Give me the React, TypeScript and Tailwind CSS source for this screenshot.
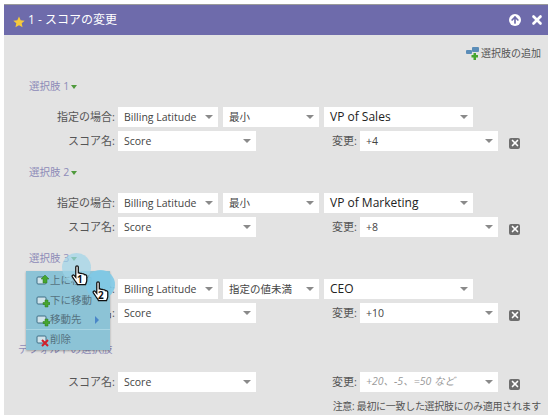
import React from 'react';
import { ArrowUp, X } from 'lucide-react';

const font = "font-['Open_Sans','Noto_Sans_CJK_JP',sans-serif]";

function Caret() {
  return <span className="w-0 h-0 border-x-[4px] border-x-transparent border-t-[4px] border-t-[#8a8a8a] shrink-0" />;
}

function Select({ value, width, big, hint }: { value: string; width: string; big?: boolean; hint?: boolean }) {
  return (
    <div className={`${width} h-5 bg-white flex items-center justify-between pl-[6px] pr-[5px] shrink-0 whitespace-nowrap`}>
      <span
        className={
          hint
            ? 'text-[10.500px] italic text-[#9a9a9a]'
            : big
              ? 'text-[12px] text-[#222]'
              : 'text-[10.500px] text-[#444] pt-px'
        }
      >
        {value}
      </span>
      <Caret />
    </div>
  );
}

function RemoveIcon() {
  return (
    <div className="w-[11px] h-[11px] ml-[11px] mt-[4px] rounded-[2px] bg-[#6e6e6e] flex items-center justify-center shrink-0">
      <X className="w-[10px] h-[10px] text-white" strokeWidth={4} />
    </div>
  );
}

function ScoreRow({ value, hint }: { value: string; hint?: boolean }) {
  return (
    <div className="flex items-center h-5">
      <span className="w-[114px] text-right pr-[3px] shrink-0 text-[11px] text-[#555]">スコア名:</span>
      <Select value="Score" width="w-[138px]" />
      <span className="w-[104px] text-right pr-[3px] shrink-0 text-[11px] text-[#555]">変更:</span>
      <Select value={value} width="w-[138px]" hint={hint} />
      <RemoveIcon />
    </div>
  );
}

function Choice({ n, field, op, value, score, mb }: { n: number; field: string; op: string; value: string; score: string; mb: string }) {
  return (
    <div className={mb}>
      <div className="flex items-center h-4 pl-[25px] text-[10.500px] text-[#8d8bb8] gap-[2px]">
        選択肢 {n}
        <span className="w-0 h-0 border-x-[3px] border-x-transparent border-t-[4px] border-t-[#4f9a3c]" />
      </div>
      <div className="flex items-center h-5 mt-[12px]">
        <span className="w-[114px] text-right pr-[3px] shrink-0 text-[11px] text-[#555]">指定の場合:</span>
        <Select value={field} width="w-[100px]" />
        <div className="w-[5px]" />
        <Select value={op} width="w-[96px]" />
        <div className="w-[5px]" />
        <Select value={value} width="w-[149px]" big />
      </div>
      <div className="mt-[4px]">
        <ScoreRow value={score} />
      </div>
    </div>
  );
}

function MenuIcon({ kind }: { kind: 'up' | 'down' | 'del' }) {
  return (
    <svg width="14" height="14" viewBox="0 0 14 14" className="shrink-0">
      <rect x="1" y="3" width="9" height="7" rx="1" fill="#cfe3ea" stroke="#3f6f86" />
      {kind === 'del' ? (
        <path d="M6 7l6 6M12 7l-6 6" stroke="#d0202a" strokeWidth="2" />
      ) : kind === 'up' ? (
        <path d="M9 1l4 4h-2v4H7V5H5z" fill="#46a52f" stroke="#2d7a1d" strokeWidth=".5" />
      ) : (
        <path d="M9 6h3v2.500h2v2h-2V13H9v-2.500H7v-2h2z" fill="#46a52f" stroke="#2d7a1d" strokeWidth=".5" />
      )}
    </svg>
  );
}

function Hand({ n, className }: { n: number; className: string }) {
  return (
    <div className={`absolute w-[18px] h-[22px] ${className}`}>
      <svg width="18" height="22" viewBox="0 0 20 26">
        <path
          d="M5 2.500c0-1.800 3-1.800 3 0V10c0-1 2.500-1 2.500 .5 0-1 2.500-1 2.500 .5 0-1 2.500-.8 2.500 1 .3-.8 2.500-.5 2.500 1.200v5c0 2-1 3-1.500 5H7c-.5-2-2-3-3.500-5.500L1 14c-1-1.800 1-3 2.300-1.500L5 14.500z"
          fill="#fff"
          stroke="#111"
          strokeWidth="1.500"
        />
      </svg>
      <span className="absolute left-[6px] top-[9px] text-[10px] leading-none font-bold text-[#111]">{n}</span>
    </div>
  );
}

export default function App() {
  return (
    <div className={`${font} w-[548px] h-[415px] bg-white pl-1 pt-1 overflow-hidden`}>
      <div className="relative h-[411px] bg-[#e3e3e3] border-t border-[#9a9a9a]">
        <header className="h-[30px] bg-[#6e6bab] flex items-center pl-[9px] pr-[4px] text-white">
          <svg width="12" height="12" viewBox="0 0 24 24" className="mt-[3px] shrink-0">
            <path d="M12 1l3.400 7.400 8 .9-6 5.400 1.700 8L12 18.600 4.900 22.700l1.700-8-6-5.400 8-.9z" fill="#f5c93c" />
          </svg>
          <span className="ml-[3px] text-[12px]">1 - スコアの変更</span>
          <div className="ml-auto flex items-center gap-[9px]">
            <div className="w-[12px] h-[12px] rounded-full bg-white flex items-center justify-center">
              <ArrowUp className="w-[10px] h-[10px] text-[#6e6bab]" strokeWidth={4} />
            </div>
            <X className="w-[14px] h-[14px]" strokeWidth={4.500} />
          </div>
        </header>

        <div className="flex justify-end items-center h-4 mt-[10px] pr-[7px] text-[10px] text-[#555] gap-[1px]">
          <svg width="14" height="14" viewBox="0 0 14 14" className="shrink-0">
            <rect x="0" y="4" width="6" height="4" rx="1" fill="#5b8db8" />
            <rect x="6" y="1" width="7" height="5" rx="1" fill="#5b8db8" />
            <path d="M7.500 7h2.500v2H12v2.500h-2v2.500H7.500v-2.500h-2V9h2z" fill="#46a52f" />
          </svg>
          選択肢の追加
        </div>

        <div className="mt-[18px]">
          <Choice n={1} field="Billing Latitude" op="最小" value="VP of Sales" score="+4" mb="mb-[14px]" />
          <Choice n={2} field="Billing Latitude" op="最小" value="VP of Marketing" score="+8" mb="mb-[14px]" />
          <Choice n={3} field="Billing Latitude" op="指定の値未満" value="CEO" score="+10" mb="mb-[19px]" />
        </div>

        <div className="pl-[14px] h-4 flex items-center text-[10.500px] text-[#8d8bb8]">デフォルトの選択肢</div>
        <div className="mt-[14px]">
          <ScoreRow value="+20、-5、=50 など" hint />
        </div>
        <div className="text-right pr-[7px] mt-[7px] text-[10px] tracking-[-0.3px] text-[#555] whitespace-nowrap">
          注意: 最初に一致した選択肢にのみ適用されます
        </div>

        <div className="absolute left-[22px] top-[266px] w-[84px] h-[79px] bg-[#8cc3d6] shadow-[0_1px_2px_rgba(0,0,0,.3)] text-[10.500px] text-[#55727f]">
          <div className="flex items-center h-[20px] pl-[10px]">
            <MenuIcon kind="up" />
            上に移動
          </div>
          <div className="flex items-center h-[19px] pl-[10px]">
            <MenuIcon kind="down" />
            下に移動
          </div>
          <div className="flex items-center h-[19px] pl-[10px]">
            <MenuIcon kind="down" />
            移動先
            <span className="ml-[13px] w-0 h-0 border-y-[4px] border-y-transparent border-l-[4px] border-l-[#4a86c8]" />
          </div>
          <div className="border-t border-[#a9d5e3] flex items-center h-[21px] pl-[10px]">
            <MenuIcon kind="del" />
            削除
          </div>
        </div>

        <div className="absolute left-[58px] top-[248px] w-[29px] h-[29px] rounded-full bg-[#9ed4e8]/70" />
        <div className="absolute left-[82px] top-[265px] w-[29px] h-[29px] rounded-full bg-[#7fc9e6]/90" />
        <Hand n={1} className="left-[67px] top-[260px]" />
        <Hand n={2} className="left-[88px] top-[276px]" />
      </div>
    </div>
  );
}
